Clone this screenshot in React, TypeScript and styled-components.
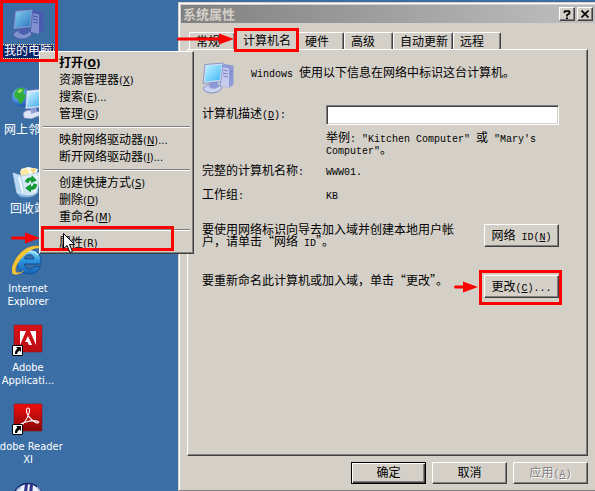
import React from 'react';
import styled, { createGlobalStyle, css } from 'styled-components';

const face = '#d4d0c8';
const sans = "'DejaVu Sans Condensed', 'Noto Sans CJK SC', sans-serif";
const song = "'Noto Sans CJK SC', sans-serif";

const GlobalStyle = createGlobalStyle`
  * { box-sizing: border-box; }
  body { margin: 0; color: #000; font: 12px/12px ${song}; }
  button, input { font: inherit; color: inherit; margin: 0; border-radius: 0; }
`;

const raised = css`
  border: 1px solid;
  border-color: #fff #404040 #404040 #fff;
  box-shadow: inset -1px -1px #808080;
`;

const Desktop = styled.main`
  position: relative;
  min-height: 100vh;
  overflow: hidden;
  background: #3a6ea5;
`;

const Shortcuts = styled.div`
  display: flex;
  flex-direction: column;
  width: 76px;
  height: 100vh;
  margin-left: -10px;
  padding-top: 8px;
`;

const Shortcut = styled.button`
  position: relative;
  display: flex;
  flex: none;
  flex-direction: column;
  align-items: center;
  gap: 5px;
  height: 79px;
  padding: 0;
  border: 0;
  background: none;
  color: #fff;
  font: 11px/13px ${sans};
`;

const ShortcutName = styled.span<{ $selected?: boolean; $cjk?: boolean }>`
  font-size: ${p => (p.$cjk ? 12 : 11)}px;
  white-space: pre;
  text-align: center;
  ${p => p.$selected && css`
    padding: 0 1px;
    background: #0a246a;
    outline: 1px dotted #f5db95;
  `}
`;

const Dialog = styled.section`
  position: absolute;
  top: 2px;
  left: 178px;
  right: -2px;
  bottom: 0;
  display: flex;
  flex-direction: column;
  padding: 1px 8px 6px 8px;
  background: ${face};
  border: 1px solid;
  border-color: ${face} #404040 #857f8c ${face};
  box-shadow: inset 1px 1px #fff;
`;

const TitleBar = styled.header`
  display: flex;
  align-items: center;
  gap: 2px;
  height: 18px;
  margin: 1px -7px 0 -6px;
  padding: 0 2px;
  background: linear-gradient(90deg, #808080, #c0c0c0);
`;

const Title = styled.h1`
  flex: 1;
  margin: 0;
  color: ${face};
  font: bold 13px/16px ${song};
`;

const CaptionButton = styled.button`
  ${raised}
  display: grid;
  place-items: center;
  width: 16px;
  height: 14px;
  padding: 0;
  background: ${face};
`;

const TabStrip = styled.div`
  display: flex;
  align-items: flex-end;
  height: 26px;
  padding-left: 2px;
`;

const Tab = styled.button<{ $w: number; $active?: boolean }>`
  position: relative;
  width: ${p => p.$w}px;
  height: 17px;
  padding: 0 0 0 6px;
  text-align: left;
  white-space: nowrap;
  background: ${face};
  border: solid;
  border-width: 1px 1px 0;
  border-color: #fff #404040 #fff #fff;
  border-radius: 2px 2px 0 0;
  box-shadow: inset -1px 0 #808080;
  ${p => p.$active && css`
    z-index: 1;
    height: 21px;
    margin: 0 -1px -1px -1px;
    padding-left: 8px;
  `}
`;

const Panel = styled.div`
  flex: 1;
  padding: 12px 28px 0 14px;
  ${raised}
`;

const Intro = styled.div`
  display: flex;
  gap: 17px;
  height: 43px;
`;

const IntroText = styled.p`
  margin: 4px 0 0;
`;

const Fields = styled.div`
  display: grid;
  grid-template-columns: 124px 1fr;
  row-gap: 12px;
`;

const FieldLabel = styled.label`
  margin-top: 2px;
`;

const Value = styled.span``;

const Hint = styled.span`
  grid-column: 2;
  margin-top: -6px;
  margin-bottom: -3px;
`;

const DescriptionInput = styled.input`
  width: 100%;
  height: 20px;
  padding: 0 3px;
  background: #fff;
  border: 1px solid;
  border-color: #808080 #fff #fff #808080;
  box-shadow: inset 1px 1px #404040, inset -1px -1px ${face};
`;

const Actions = styled.div`
  margin-top: 22px;
`;

const ActionRow = styled.div`
  display: grid;
  grid-template-columns: 1fr 75px;
  column-gap: 24px;
  min-height: 51px;
  padding-top: 1px;
  align-items: start;
`;

const ActionText = styled.p`
  margin: 0;
`;

const PushButton = styled.button<{ $default?: boolean }>`
  ${raised}
  position: relative;
  width: 75px;
  height: 23px;
  padding: 0 0 2px;
  white-space: nowrap;
  background: ${face};
  ${p => p.$default && css`
    border-color: #000;
    box-shadow: inset 1px 1px #fff, inset -1px -1px #404040, inset -2px -2px #808080;
  `}
  &:disabled {
    color: #808080;
    text-shadow: 1px 1px #fff;
  }
  ${ActionRow} & { margin-top: 1px; }
`;

const Footer = styled.footer`
  display: flex;
  justify-content: flex-end;
  gap: 6px;
  padding-top: 6px;
  ${PushButton} { height: 22px; }
`;

const Latin = styled.span`
  font-family: 'Liberation Mono', monospace;
  font-size: 10px;
  line-height: 1px;
  white-space: pre-wrap;
`;

const Menu = styled.div`
  ${raised}
  position: absolute;
  top: 51px;
  left: 39px;
  width: 155px;
  padding: 2px;
  background: ${face};
  z-index: 2;
`;

const MenuItem = styled.button<{ $bold?: boolean }>`
  position: relative;
  display: block;
  width: 100%;
  height: 17px;
  padding: 0 0 2px 17px;
  border: 0;
  background: none;
  text-align: left;
  white-space: nowrap;
  font: ${p => (p.$bold ? 'bold' : 'normal')} 12px/15px ${song};
`;

const Accel = styled.span`
  font-family: ${sans};
  font-size: 11px;
  line-height: 1px;
`;

const Separator = styled.hr`
  height: 2px;
  margin: 4px 1px 3px;
  border: 0;
  border-top: 1px solid #808080;
  border-bottom: 1px solid #fff;
`;

const Callout = styled.span<{ $inset: string }>`
  position: absolute;
  inset: ${p => p.$inset};
  border: 3px solid #f00;
  z-index: 5;
  pointer-events: none;
`;

const CalloutArrow = styled.svg`
  position: absolute;
  top: 50%;
  right: 100%;
  margin: -7px 4px 0 0;
`;

const TabArrow = styled.span`
  ${CalloutArrow} { margin-right: 3px; }
`;

const Pointer = styled.svg`
  position: absolute;
  left: 21px;
  top: -1px;
  z-index: 6;
`;

function Arrow({ length }: { length: number }) {
  return (
    <CalloutArrow width={length} height="12" aria-hidden="true">
      <path d={`M1.5 6H${length - 12}`} stroke="#f00" strokeWidth="3" strokeLinecap="round" />
      <path d={`M${length - 15} 0.5L${length} 6L${length - 15} 11.5z`} fill="#f00" />
    </CalloutArrow>
  );
}

function ComputerIcon({ dim }: { dim?: boolean }) {
  const c = dim
    ? { edge: '#4556a0', frame: '#8099cc', a: '#86d0f2', b: '#2873bd', side: '#4a5cae', front: '#8290d0', line: '#4053a5' }
    : { edge: '#6b7cba', frame: '#d3ddf5', a: '#c0f6ff', b: '#3db4f5', side: '#8d9ad6', front: '#c5ccee', line: '#7582c2' };
  const id = dim ? 'screenDim' : 'screenLit';
  return (
    <svg width="32" height="32" viewBox="0 0 32 32" aria-hidden="true">
      <defs>
        <linearGradient id={id} x1="0" y1="0" x2="1" y2="1">
          <stop offset="0" stopColor={c.a} /><stop offset="1" stopColor={c.b} />
        </linearGradient>
      </defs>
      <path d="M19 5l3-3 9.500 1.500v19L27 26l-9-2z" fill={c.side} />
      <path d="M19 5l8 1.500V26l-8-2z" fill={c.front} />
      <path d="M21 8l5 1M21 11l5 1M21 14l5 1M28 10l2.500-1.500M28 13l2.500-1.500" stroke={c.line} />
      <path d="M1 26q2-3 8-4l8 1 3 2.500q-1 4-9 5.500-9 0-10-5z" fill={c.front} stroke={c.edge} strokeWidth=".7" />
      <path d="M8 20l7-1 2 6-5 2-5-2z" fill={c.side} />
      <path d="M4 27l6 2 8-3" stroke={c.frame} fill="none" strokeWidth="1.2" />
      <path d="M3 2.500L21 1 19 19.500 1 21.500z" fill={c.frame} stroke={c.edge} strokeWidth=".7" />
      <path d="M4.500 4L19.500 2.600 17.700 18 2.600 19.800z" fill={`url(#${id})`} />
    </svg>
  );
}

function NetworkIcon() {
  return (
    <svg width="32" height="32" viewBox="0 0 32 32" aria-hidden="true">
      <defs>
        <radialGradient id="globe" cx=".35" cy=".3" r=".8">
          <stop offset="0" stopColor="#8fd4ff" /><stop offset="1" stopColor="#0b47b0" />
        </radialGradient>
        <linearGradient id="netScreen" x2="1" y2="1">
          <stop stopColor="#d8f8ff" /><stop offset="1" stopColor="#2aa0ee" />
        </linearGradient>
      </defs>
      <circle cx="9.500" cy="10" r="9.500" fill="url(#globe)" />
      <path d="M6 1.500q5-2 7 1l-2 3 3 3-3 6-3 3-2-5-4-3 1-5z" fill="#2fae35" />
      <path d="M8 2l3 1-3 3-3-1z" fill="#a4e26f" />
      <path d="M11 27q1-4 8-4l9 2-1 4-8 3-7-1z" fill="#dfe5f7" stroke="#6d7fb8" strokeWidth=".7" />
      <path d="M18 20h6l1 5-6 2z" fill="#8fa1d5" />
      <path d="M14.500 3.500L32 2v18l-18.500 2z" fill="#e5edfb" stroke="#7187c0" strokeWidth=".7" />
      <path d="M16 5.500L32 4v14.500L15 20.500z" fill="url(#netScreen)" />
    </svg>
  );
}

function RecycleIcon() {
  return (
    <svg width="32" height="32" viewBox="0 0 32 32" aria-hidden="true">
      <path d="M9 3l7-2 10 2-3 9-13 2z" fill="#fff" />
      <path d="M8 5l6-3 4 4-4 6-5-1z" fill="#ffe8a3" />
      <path d="M18 3l6-1-2 8z" fill="#f6d982" />
      <path d="M1 7l9 3 19-4-4 21q-6 5-17 3L5 27z" fill="#dfeefb" opacity=".93" stroke="#b4d4ef" />
      <path d="M1.500 7.500L10 11l3 18-7-2z" fill="#b7d9f3" />
      <path d="M7 11l4 16M25 10l-3 16" stroke="#fff" strokeWidth="1.500" />
      <path d="M5 27q11 5 20 0l-3 3q-9 3-15 0z" fill="#82aedb" />
      <path d="M13 16q1-5 6-4.500l1-2 5 5-6 2.500v-2.500q-2 0-2.500 2.500z" fill="#119a34" />
      <path d="M25 18q0 6-6 6v2.500l-6-4.500 6-4v2.500q2 0 2.500-3z" fill="#119a34" />
    </svg>
  );
}

function ExplorerIcon() {
  return (
    <svg width="32" height="32" viewBox="0 0 32 32" aria-hidden="true">
      <defs>
        <linearGradient id="ieBlue" x2="0" y2="1">
          <stop stopColor="#9be3ff" /><stop offset=".45" stopColor="#2b94df" /><stop offset="1" stopColor="#1564b5" />
        </linearGradient>
      </defs>
      <path
        d="M29 19H12.500q.5 5 5 5 3 0 4.500-2.500h6.500Q25.500 29 17.500 29 5 28.500 5 17 6 5 17.500 4.500 30 5 29 19zM12.500 14H22q-.5-4.500-4.500-4.500-4.500 0-5 4.500z"
        fill="url(#ieBlue)" stroke="#104d95" strokeWidth=".9" fillRule="evenodd"
      />
      <path d="M8 14q2-7 9-8 6 0 9 4" fill="none" stroke="#c5f1ff" strokeWidth="1.500" opacity=".7" />
      <path d="M27 1Q15-1 5 12-3 25 1 29q4 2 11-3-7 3-8 1-2-4 4-12Q17 3 27 3q3 1 2 5 3-6-2-7z" fill="#f7c534" stroke="#d99818" strokeWidth=".3" />
    </svg>
  );
}

function LinkMark() {
  return (
    <>
      <path d="M0 21h11v11H0z" fill="#fff" />
      <path d="M.5 21.500h10v10H.5z" fill="none" stroke="#000" />
      <path d="M4 23h5v5l-1.500-1.500Q5 28 5 30H3q-.5-3 2.500-5.500z" fill="#000" />
    </>
  );
}

function AdobeIcon({ reader }: { reader?: boolean }) {
  const id = reader ? 'redReader' : 'redApp';
  return (
    <svg width="32" height="32" viewBox="0 0 32 32" aria-hidden="true">
      <defs>
        <linearGradient id={id} x2="0" y2="1">
          <stop stopColor={reader ? '#f20d0d' : '#d9141a'} /><stop offset="1" stopColor={reader ? '#850808' : '#b80d12'} />
        </linearGradient>
      </defs>
      <path d="M2 1h28v27H2z" fill={`url(#${id})`} stroke="#8d1a20" strokeWidth=".6" />
      {reader ? (
        <path
          d="M16 5q2.500 0 1 5-1 5-6 11-3 4-4 2 0-2 7-4 7-2 11-1 3 1 1 2-3 0-7-4-5-5-4.500-9Q14.500 5 16 5z"
          fill="none" stroke="#fff" strokeWidth="1.100"
        />
      ) : (
        <path d="M8 7h6L8 21zM18 7h6v14zM16 12l4 9h-3l-1.500-3H13z" fill="#fff" />
      )}
      <LinkMark />
    </svg>
  );
}

function DiscIcon() {
  return (
    <svg width="32" height="32" viewBox="0 0 32 32" aria-hidden="true">
      <circle cx="16" cy="16" r="14.500" fill="#eef3fb" stroke="#17266f" strokeWidth="1.500" />
      <path d="M13 2h3l-3 28h-4zM18 2h3l-2 28h-4z" fill="#34388a" />
      <path d="M5 8l4-3M25 5l3 4" stroke="#a5b9d8" strokeWidth="2" />
    </svg>
  );
}

function Key({ k, tail = '' }: { k: string; tail?: string }) {
  return <Accel>(<u>{k}</u>){tail}</Accel>;
}

function MonoKey({ k, tail = '' }: { k: string; tail?: string }) {
  return <Latin>(<u>{k}</u>){tail}</Latin>;
}

export default function App() {
  return (
    <Desktop>
      <GlobalStyle />
      <Shortcuts>
        <Shortcut>
          <ComputerIcon dim />
          <ShortcutName $cjk $selected>我的电脑</ShortcutName>
          <Callout $inset="-8px 8px 25px 10px" />
        </Shortcut>
        <Shortcut><NetworkIcon /><ShortcutName $cjk>网上邻居</ShortcutName></Shortcut>
        <Shortcut><RecycleIcon /><ShortcutName $cjk>回收站</ShortcutName></Shortcut>
        <Shortcut><ExplorerIcon /><ShortcutName>{'Internet\nExplorer'}</ShortcutName></Shortcut>
        <Shortcut><AdobeIcon /><ShortcutName>{'Adobe\nApplicati...'}</ShortcutName></Shortcut>
        <Shortcut><AdobeIcon reader /><ShortcutName>{'Adobe Reader\nXI'}</ShortcutName></Shortcut>
        <Shortcut aria-label="disc"><DiscIcon /></Shortcut>
      </Shortcuts>

      <Dialog role="dialog" aria-labelledby="dialog-title">
        <TitleBar>
          <Title id="dialog-title">系统属性</Title>
          <CaptionButton aria-label="帮助">
            <svg width="8" height="9" viewBox="0 0 8 9">
              <path d="M1.500 3V1.500h1V1h3v.5h1V3.500L4 5v1.500" fill="none" stroke="#000" strokeWidth="1.600" />
              <path d="M3 7.500h2V9H3z" />
            </svg>
          </CaptionButton>
          <CaptionButton aria-label="关闭">
            <svg width="8" height="8" viewBox="0 0 8 8">
              <path d="M.5.5l7 7M7.500.5l-7 7" stroke="#000" strokeWidth="1.600" />
            </svg>
          </CaptionButton>
        </TitleBar>
        <TabStrip role="tablist">
          <Tab role="tab" $w={46}>常规</Tab>
          <Tab role="tab" $w={65} $active aria-selected="true">
            计算机名
            <Callout $inset="-2px -1px -2px -1px"><TabArrow><Arrow length={57} /></TabArrow></Callout>
          </Tab>
          <Tab role="tab" $w={46}>硬件</Tab>
          <Tab role="tab" $w={49}>高级</Tab>
          <Tab role="tab" $w={60}>自动更新</Tab>
          <Tab role="tab" $w={48}>远程</Tab>
        </TabStrip>
        <Panel role="tabpanel">
          <Intro>
            <ComputerIcon />
            <IntroText><Latin>Windows </Latin>使用以下信息在网络中标识这台计算机。</IntroText>
          </Intro>
          <Fields>
            <FieldLabel htmlFor="description">计算机描述<MonoKey k="D" tail=":" /></FieldLabel>
            <DescriptionInput id="description" type="text" />
            <Hint>
              举例<Latin>: "Kitchen Computer" </Latin>或<Latin> "Mary's Computer"</Latin>。
            </Hint>
            <Value>完整的计算机名称<Latin>:</Latin></Value>
            <Value><Latin>WWW01.</Latin></Value>
            <Value>工作组<Latin>:</Latin></Value>
            <Value><Latin>KB</Latin></Value>
          </Fields>
          <Actions>
            <ActionRow>
              <ActionText>要使用网络标识向导去加入域并创建本地用户帐户，请单击“网络<Latin> ID</Latin>”。</ActionText>
              <PushButton>网络<Latin> ID</Latin><MonoKey k="N" /></PushButton>
            </ActionRow>
            <ActionRow>
              <ActionText>要重新命名此计算机或加入域，单击“更改”。</ActionText>
              <PushButton>
                更改<MonoKey k="C" tail="..." />
                <Callout $inset="-6px -4px -8px -6px"><Arrow length={24} /></Callout>
              </PushButton>
            </ActionRow>
          </Actions>
        </Panel>
        <Footer>
          <PushButton $default>确定</PushButton>
          <PushButton>取消</PushButton>
          <PushButton disabled>应用<MonoKey k="A" /></PushButton>
        </Footer>
      </Dialog>

      <Menu role="menu">
        <MenuItem role="menuitem" $bold>打开<Key k="O" /></MenuItem>
        <MenuItem role="menuitem">资源管理器<Key k="X" /></MenuItem>
        <MenuItem role="menuitem">搜索<Key k="E" tail="..." /></MenuItem>
        <MenuItem role="menuitem">管理<Key k="G" /></MenuItem>
        <Separator />
        <MenuItem role="menuitem">映射网络驱动器<Key k="N" tail="..." /></MenuItem>
        <MenuItem role="menuitem">断开网络驱动器<Key k="I" tail="..." /></MenuItem>
        <Separator />
        <MenuItem role="menuitem">创建快捷方式<Key k="S" /></MenuItem>
        <MenuItem role="menuitem">删除<Key k="D" /></MenuItem>
        <MenuItem role="menuitem">重命名<Key k="M" /></MenuItem>
        <Separator />
        <MenuItem role="menuitem">
          属性<Key k="R" />
          <Callout $inset="-8px 17px 0 -1px"><Arrow length={29} /></Callout>
          <Pointer width="12" height="21" viewBox="0 0 12 21" aria-hidden="true">
            <path d="M.5.5v15l3.500-3 3 7 2.500-1-3-7h5z" fill="#fff" stroke="#000" />
          </Pointer>
        </MenuItem>
      </Menu>
    </Desktop>
  );
}
